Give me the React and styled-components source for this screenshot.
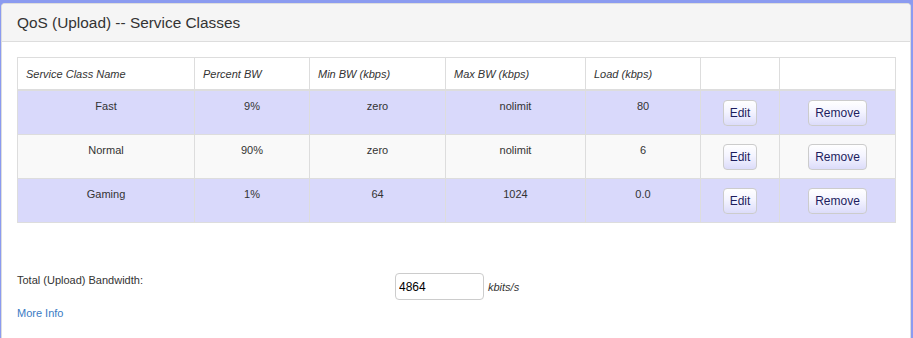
import React from "react";
import styled, { createGlobalStyle } from "styled-components";

const Global = createGlobalStyle`
  html, body { margin: 0; padding: 0; }
  body {
    background: #8b9bf0;
    font-family: "Liberation Sans", Arial, Helvetica, sans-serif;
    color: #333;
    overflow: hidden;
  }
`;

const Page = styled.div`
  padding: 3px 2px 0 1px;
`;

const Panel = styled.section`
  box-sizing: border-box;
  background: #fff;
  border: 1px solid #ddd;
  border-bottom: none;
  border-radius: 4px 4px 0 0;
  min-height: calc(100vh - 3px);
`;

const PanelHeader = styled.header`
  height: 37px;
  display: flex;
  align-items: center;
  padding: 0 15px;
  background: #f5f5f5;
  border-bottom: 1px solid #ddd;
  border-radius: 3px 3px 0 0;
`;

const Title = styled.h3`
  margin: 0;
  font-size: 15.4px;
  font-weight: normal;
  color: #333;
`;

const PanelBody = styled.div`
  padding: 15px 15px 0 15px;
`;

const Table = styled.table`
  width: 878px;
  border-collapse: collapse;
  table-layout: fixed;
  border: 1px solid #ddd;
  font-size: 11px;
`;

const HeadCell = styled.th`
  height: 31px;
  padding: 0 8px;
  text-align: left;
  font-weight: normal;
  font-style: italic;
  vertical-align: middle;
  border: 1px solid #ddd;
  border-bottom: 2px solid #ddd;
  background: #fff;
  color: #333;
`;

const Row = styled.tr`
  height: 44px;
  background: ${(p) => (p.$alt ? "#f9f9f9" : "#d9d9fb")};
`;

const Cell = styled.td`
  padding: 8px;
  text-align: center;
  vertical-align: top;
  line-height: 15.7px;
  border: 1px solid #ddd;
  color: #333;
`;

const Button = styled.button`
  display: inline-block;
  margin-top: 1px;
  height: 26px;
  padding: 0 6px;
  font-family: "Liberation Sans", Arial, sans-serif;
  font-size: 12px;
  color: #1d1d5e;
  border: 1px solid #ccc;
  border-radius: 4px;
  background: linear-gradient(to bottom, #ffffff 0%, #f4f4ff 45%, #dcdcfa 100%);
  cursor: pointer;
`;

const FormRow = styled.div`
  display: flex;
  align-items: flex-start;
  margin-top: 50px;
  font-size: 11px;
`;

const Label = styled.label`
  width: 378px;
  line-height: 15.7px;
  color: #333;
`;

const Input = styled.input`
  box-sizing: border-box;
  width: 89px;
  height: 27px;
  padding: 0 3px;
  border: 1px solid #ccc;
  border-radius: 4px;
  font-family: "Liberation Sans", Arial, sans-serif;
  font-size: 12px;
  color: #000;
`;

const Unit = styled.em`
  align-self: center;
  margin-left: 4px;
  margin-top: 1px;
  color: #333;
`;

const MoreInfo = styled.a`
  display: inline-block;
  margin-top: 6px;
  font-size: 11px;
  line-height: 15.7px;
  color: #3a7bc4;
  text-decoration: none;
`;

const widths = [177, 115, 136, 140, 115, 79, 116];
const heads = [
  "Service Class Name",
  "Percent BW",
  "Min BW (kbps)",
  "Max BW (kbps)",
  "Load (kbps)",
  "",
  "",
];
const rows = [
  ["Fast", "9%", "zero", "nolimit", "80"],
  ["Normal", "90%", "zero", "nolimit", "6"],
  ["Gaming", "1%", "64", "1024", "0.0"],
];

export default function App() {
  return (
    <Page>
      <Global />
      <Panel>
        <PanelHeader>
          <Title>QoS (Upload) -- Service Classes</Title>
        </PanelHeader>
        <PanelBody>
          <Table>
            <colgroup>
              {widths.map((w, i) => (
                <col key={i} style={{ width: w }} />
              ))}
            </colgroup>
            <thead>
              <tr>
                {heads.map((h, i) => (
                  <HeadCell key={i}>{h}</HeadCell>
                ))}
              </tr>
            </thead>
            <tbody>
              {rows.map((r, i) => (
                <Row key={i} $alt={i === 1}>
                  {r.map((c, j) => (
                    <Cell key={j}>{c}</Cell>
                  ))}
                  <Cell>
                    <Button>Edit</Button>
                  </Cell>
                  <Cell>
                    <Button>Remove</Button>
                  </Cell>
                </Row>
              ))}
            </tbody>
          </Table>
          <FormRow>
            <Label htmlFor="bw">Total (Upload) Bandwidth:</Label>
            <Input id="bw" defaultValue="4864" />
            <Unit>kbits/s</Unit>
          </FormRow>
          <MoreInfo href="#">More Info</MoreInfo>
        </PanelBody>
      </Panel>
    </Page>
  );
}
